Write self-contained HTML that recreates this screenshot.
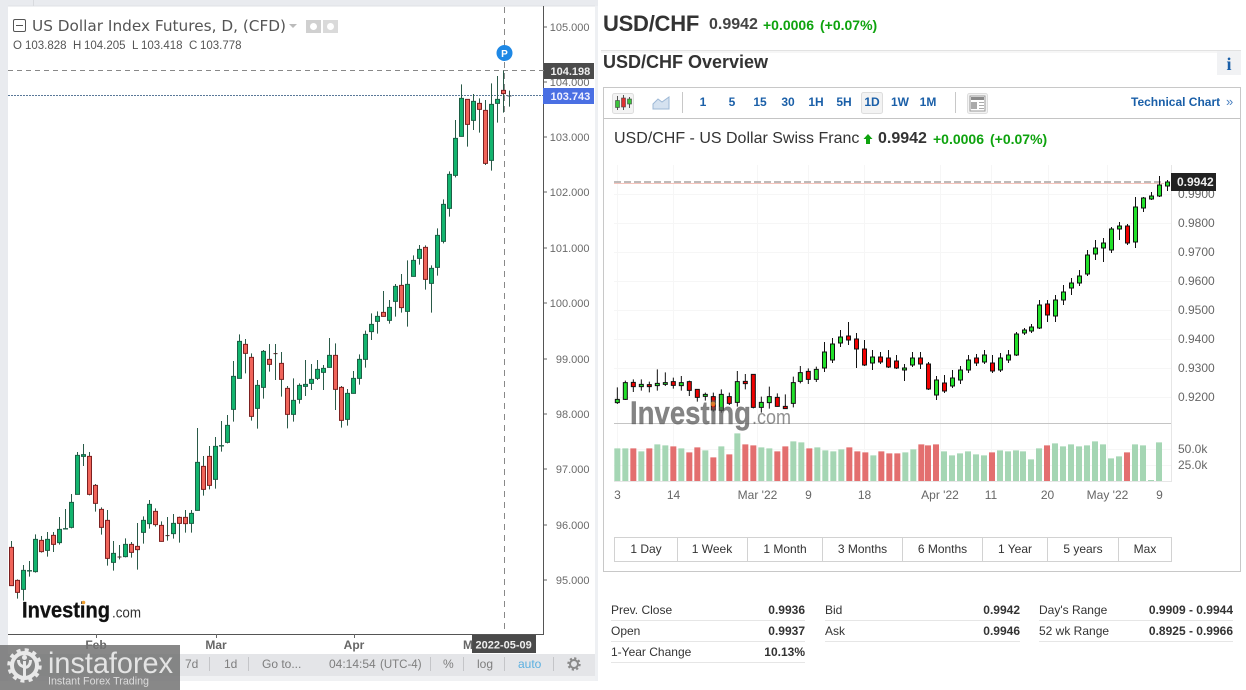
<!DOCTYPE html>
<html><head><meta charset="utf-8"><style>
html,body{margin:0;padding:0;width:1246px;height:690px;overflow:hidden;background:#fff;font-family:"Liberation Sans",sans-serif;color:#333}
.t{position:absolute;white-space:nowrap;line-height:1}
.b{font-weight:700}
.g{color:#0ea30e}
.tb{position:absolute;top:96px;font:700 12px/12px "Liberation Sans",sans-serif;color:#1a5fa8;width:28px;text-align:center}
.row{position:absolute;height:20px;border-bottom:1px solid #e6e6e6;font-size:12px;line-height:20px;color:#333}
.row b{position:absolute;right:0;top:0;color:#333}
.rg{position:absolute;top:537px;height:23px;border:1px solid #d2d2d2;border-left:0;font-size:12px;line-height:23px;text-align:center;color:#333;box-sizing:content-box}
svg{position:absolute;left:0;top:0}
</style></head><body>
<svg width="1246" height="690" viewBox="0 0 1246 690" font-family="Liberation Sans, sans-serif">
<!-- left panel frame -->
<rect x="0" y="0" width="598" height="6" fill="#e9ebef"/>
<rect x="0" y="0" width="8" height="681" fill="#e9ebef"/>
<rect x="8" y="5.5" width="587" height="1" fill="#dfe1e5"/>
<rect x="595" y="6" width="3" height="675" fill="#eef0f3"/>
<rect x="33" y="0" width="1" height="6" fill="#d8dade"/>
<rect x="8" y="654" width="587" height="22" fill="#e4e5e8"/>
<rect x="8" y="676" width="587" height="5" fill="#f0f1f3"/>
<!-- left axes -->
<path d="M543.5 6V634.5H8" fill="none" stroke="#555" stroke-width="1"/>
<path d="M544 27h3M544 82h3M544 137h3M544 192h3M544 248h3M544 303h3M544 359h3M544 414h3M544 469h3M544 525h3M544 580h3M96.5 634v4M216.5 634v4M354.5 634v4" stroke="#666"/>
<path d="M8 70.5H544" stroke="#888" stroke-dasharray="5 4"/>
<path d="M8 95.5H544" stroke="#5a7898" stroke-dasharray="2 1"/>
<path d="M504.5 7V634" stroke="#888" stroke-dasharray="6 5"/>
<g font-size="11" fill="#6a6a6a" text-anchor="end">
<text x="589.500" y="31">105.000</text><text x="589.500" y="141">103.000</text><text x="589.500" y="196">102.000</text><text x="589.500" y="252">101.000</text><text x="589.500" y="307">100.000</text><text x="589.500" y="363">99.000</text><text x="589.500" y="418">98.000</text><text x="589.500" y="473">97.000</text><text x="589.500" y="529">96.000</text><text x="589.500" y="584">95.000</text><text x="589.500" y="86">104.000</text>
</g>
<!-- left candles, part 1 -->
<g transform="translate(.17,330) scale(.33333)" stroke-width="3">
<path fill="none" stroke="#2a5a48" d="M34 633V768M52 748V806M70 705V812M88 693V740M106 613V728M124 618V668M142 606V680M160 606V666M178 561V644M196 537V598M214 492V595M232 366V493M250 342V408M268 366V496M286 462V545M304 532V614M322 540V707M340 633V722M358 645V688M376 625V682M394 636V683M412 579V719M430 559V641M448 510V596M466 535V590M484 574V635M502 561V632M520 552V626M538 560V638M556 540V608M574 540V608M592 294V542M610 378V497M628 348V478M646 321V476M664 273V365M682 255V340M700 93V275M718 13V145M736 27V130M754 70V272M772 150V296M790 60V206M808 42V125M826 42V150"/>
<path fill="#f0645a" stroke="#7d2020" d="M28 652H40V767H28ZM46 751H58V787H46ZM118 631H130V665H118ZM154 616H166V643H154ZM262 379H274V493H262ZM280 466H292V520H280ZM298 538H310V592H298ZM316 571H328V685H316ZM388 643H400V667H388ZM406 649H418V659H406ZM460 544H472V584H460ZM478 586H490V634H478ZM532 562H544V580H532ZM550 562H562V581H550ZM604 409H616V478H604ZM622 379H634V466H622ZM730 43H742V70H730ZM748 82H760V259H748ZM802 88H814V103H802Z"/>
<path fill="#12b46e" stroke="#1c5f45" d="M64 721H76V778H64ZM82 722H94V723H82ZM100 628H112V725H100ZM136 628H148V661H136ZM172 598H184V638H172ZM190 596H202V597H190ZM208 517H220V592H208ZM226 376H238V493H226ZM244 374H256V379H244ZM334 670H346V697H334ZM370 643H382V680H370ZM424 571H436V607H424ZM442 523H454V581H442ZM514 580H526V611H514ZM568 550H580V580H568ZM586 397H598V541H586ZM640 349H652V448H640ZM658 347H670V348H658ZM676 286H688V337H676ZM694 139H706V238H694ZM712 34H724V145H712ZM766 166H778V235H766ZM784 64H796V172H784Z"/>
<path stroke="#4a2020" d="M352 681H364M496 617H508M820 71H832"/>
</g>
<!-- left candles, part 2 -->
<g transform="translate(270.17,80) scale(.33333)" stroke-width="3">
<path fill="none" stroke="#2a5a48" d="M34 816V950M52 918V1045M70 895V1025M88 910V971M106 840V948M124 852V930M142 840V900M160 855V930M178 774V863M196 790V990M214 918V1043M232 927V1037M250 873V941M268 823V914M286 752V863M304 700V780M322 694V761M340 633V710M358 660V731M376 612V710M394 582V698M412 541V740M430 526V590M448 495V554M466 496V629M484 556V698M502 445V587M520 358V490M538 274V410M556 120V292M574 13V170M592 57V200M610 42V150M628 55V158M646 60V255M664 10V272M682 -12V128M700 -28V98M718 32V80"/>
<path fill="#f0645a" stroke="#7d2020" d="M28 850H40V898H28ZM46 925H58V1003H46ZM190 826H202V928H190ZM208 922H220V1021H208ZM334 697H346V709H334ZM388 616H400V683H388ZM460 502H472V598H460ZM586 58H598V133H586ZM622 70H634V88H622ZM640 91H652V250H640ZM694 31H706V41H694Z"/>
<path fill="#12b46e" stroke="#1c5f45" d="M64 961H76V1003H64ZM82 916H94V958H82ZM100 913H112V919H100ZM118 898H130V910H118ZM136 868H148V895H136ZM154 865H166V877H154ZM172 826H184V862H172ZM226 940H238V1018H226ZM244 895H256V940H244ZM262 838H274V895H262ZM280 763H292V838H280ZM298 733H310V755H298ZM316 709H328V724H316ZM352 682H364V721H352ZM370 619H382V664H370ZM406 613H418V694H406ZM424 541H436V589H424ZM442 508H454V535H442ZM478 565H490V610H478ZM496 466H508V562H496ZM514 373H526V484H514ZM532 283H544V385H532ZM550 175H562V286H550ZM568 55H580V169H568ZM604 64H616V121H604ZM658 73H670V241H658ZM676 58H688V70H676Z"/>
<path stroke="#3d4a55" d="M712 48H724"/>
</g>
<!-- left tags -->
<circle cx="504.5" cy="53" r="8" fill="#1e88e5"/>
<text x="504.5" y="57" font-size="10" font-weight="700" fill="#fff" text-anchor="middle">P</text>
<rect x="544" y="63" width="50" height="16" fill="#4b4b4b"/>
<text x="550.500" y="75" font-size="11" font-weight="700" fill="#eee">104.198</text>
<rect x="543" y="88" width="51" height="16" fill="#4a6fe3"/>
<text x="550.500" y="100" font-size="11" font-weight="700" fill="#f0f0ff">103.743</text>
<rect x="472" y="635" width="64" height="18" fill="#4a4a4a"/>
<text x="475.500" y="648.500" font-size="11" font-weight="700" fill="#eee">2022-05-09</text>
<g font-size="12" font-weight="700" fill="#666" text-anchor="middle">
<text x="96" y="649">Feb</text><text x="216" y="649">Mar</text><text x="354" y="649">Apr</text><text x="468" y="649">M</text>
</g>
<!-- Investing logo left -->
<text x="22" y="617.500" font-size="22.500" font-weight="700" fill="#111" stroke="#111" stroke-width=".3" textLength="88" lengthAdjust="spacingAndGlyphs">Investing</text>
<text x="112" y="617.500" font-size="15" fill="#333" textLength="29" lengthAdjust="spacingAndGlyphs">.com</text>
<circle cx="83.500" cy="602.500" r="1.800" fill="#f0a030"/>
<!-- left toolbar -->
<g font-size="12" fill="#7e7e7e">
<text x="185" y="668">7d</text><text x="224" y="668">1d</text><text x="262" y="668">Go to...</text>
<text x="329" y="668">04:14:54</text><text x="380" y="668" font-size="11.500">(UTC-4)</text>
<text x="443" y="668">%</text><text x="477" y="668">log</text><text x="518" y="668" fill="#5bb0e0">auto</text>
</g>
<path d="M209.500 657v14M248.500 657v14M430.500 657v14M463.500 657v14M504.500 657v14M553.500 657v14" stroke="#c4c5c8"/>
<circle cx="574" cy="664" r="4" fill="none" stroke="#8a8a8a" stroke-width="2"/>
<circle cx="574" cy="664" r="5.700" fill="none" stroke="#8a8a8a" stroke-width="2" stroke-dasharray="2.200 2.270"/>
<!-- instaforex -->
<rect x="0" y="645" width="180" height="45" fill="#757575" fill-opacity=".86"/>
<circle cx="24.500" cy="665.500" r="12.500" fill="none" stroke="#e8e8e8" stroke-width="4"/>
<circle cx="24.500" cy="665.500" r="15.500" fill="none" stroke="#e8e8e8" stroke-width="3.500" stroke-dasharray="4 4.120"/>
<path d="M24.500 661V679M18.500 660c0 5 3 6 6 7s6-2 6-7" fill="none" stroke="#e8e8e8" stroke-width="3"/>
<circle cx="24.500" cy="657.500" r="2.500" fill="#e8e8e8"/>
<text x="48" y="673" font-size="30" fill="#e4e4e4" textLength="125" lengthAdjust="spacingAndGlyphs">instaforex</text>
<text x="48" y="684.500" font-size="11" fill="#dcdcdc" textLength="101" lengthAdjust="spacingAndGlyphs">Instant Forex Trading</text>
<!-- right header rule -->
<rect x="601" y="50" width="640" height="1" fill="#e2e2e2"/>
<rect x="601" y="51" width="640" height="2" fill="#f6f6f6"/>
<rect x="1217" y="51" width="24" height="24" fill="#f1f2f4"/>
<text x="1229" y="70" font-family="Liberation Serif, serif" font-size="18" font-weight="700" fill="#1a5fa8" text-anchor="middle">i</text>
<!-- right chart panel -->
<rect x="603.500" y="87.500" width="637" height="484" fill="#fff" stroke="#c8c8c8"/>
<path d="M604 118.500H1240" stroke="#c4c4c4"/>
<path d="M682.500 92v21M955.500 92v21" stroke="#c8c8c8"/>
<rect x="612.500" y="93.500" width="21" height="20" rx="2" fill="#f3f3f3" stroke="#ddd"/>
<path d="M617.500 96v14M623.500 95v15M629.500 97v11" stroke="#555"/>
<rect x="615.500" y="100.500" width="4" height="7" fill="#3bc43b" stroke="#444" stroke-width=".6"/>
<rect x="621.500" y="98" width="4" height="9" fill="#e03030" stroke="#444" stroke-width=".6"/>
<rect x="627.500" y="99" width="4" height="5" fill="#3bc43b" stroke="#444" stroke-width=".6"/>
<path d="M653 109V104L658 99L662 102L669 97V109Z" fill="#d5e2f0" stroke="#9db8d6"/>
<rect x="861.500" y="92.500" width="21" height="21" rx="2" fill="#f3f3f3" stroke="#ddd"/>
<rect x="967.500" y="93.500" width="20" height="20" rx="2" fill="#f3f3f3" stroke="#ddd"/>
<rect x="970" y="96" width="15" height="15" fill="#fff" stroke="#999"/>
<rect x="971" y="97" width="13" height="3" fill="#8a8a8a"/>
<rect x="971" y="102" width="6" height="7" fill="#aaa"/>
<path d="M979 102.500h5M979 105.500h5M979 108.500h5" stroke="#aaa"/>
<!-- right chart grid -->
<path d="M614 194.500H1171M614 223.500H1171M614 252.500H1171M614 281.500H1171M614 310.500H1171M614 339.500H1171M614 368.500H1171M614 397.500H1171M614 449.500H1171M614 465.500H1171M617.500 165V481M673.500 165V481M757.500 165V481M808.500 165V481M864.500 165V481M940.500 165V481M991.500 165V481M1048.500 165V481M1107.500 165V481" stroke="#f6f6f6"/>
<path d="M1171.500 165V481.500H614" fill="none" stroke="#e6e6e6"/>
<path d="M614 423.500H1171" stroke="#c4c4c4"/>
<path d="M614 183.500H1164" stroke="#f5c4bc"/>
<path d="M614 182H1164" stroke="#aaa4a2" stroke-width="1.500" stroke-dasharray="7 3"/>
<!-- volume -->
<g transform="translate(605,360) scale(.33333)">
<path fill="#a5d6b4" d="M28 265H46V363H28ZM52 265H70V363H52ZM100 274H118V363H100ZM148 253H166V363H148ZM172 256H190V363H172ZM220 265H238V363H220ZM292 271H310V363H292ZM340 259H358V363H340ZM388 220H406V363H388ZM460 262H478V363H460ZM484 265H502V363H484ZM556 244H574V363H556ZM580 247H598V363H580ZM628 262H646V363H628ZM652 271H670V363H652ZM676 274H694V363H676ZM700 268H718V363H700ZM796 286H814V363H796ZM892 277H910V363H892ZM916 268H934V363H916Z"/>
<path fill="#e36f6f" d="M76 265H94V363H76ZM124 265H142V363H124ZM196 259H214V363H196ZM244 277H262V363H244ZM268 262H286V363H268ZM316 292H334V363H316ZM364 283H382V363H364ZM412 253H430V363H412ZM436 256H454V363H436ZM508 274H526V363H508ZM532 259H550V363H532ZM604 265H622V363H604ZM724 262H742V363H724ZM748 274H766V363H748ZM772 277H790V363H772ZM820 274H838V363H820ZM844 280H862V363H844ZM868 280H886V363H868ZM940 253H958V363H940Z"/>
</g>
<g transform="translate(920,400) scale(.33333)">
<path fill="#e36f6f" d="M15 136H33V243H15ZM39 133H57V243H39ZM207 157H225V243H207ZM372 136H390V243H372ZM612 157H630V243H612Z"/>
<path fill="#a5d6b4" d="M63 154H81V243H63ZM87 166H105V243H87ZM111 160H129V243H111ZM135 154H153V243H135ZM159 163H177V243H159ZM183 166H201V243H183ZM231 151H249V243H231ZM255 154H273V243H255ZM279 151H297V243H279ZM300 154H318V243H300ZM324 178H342V243H324ZM348 145H366V243H348ZM396 130H414V243H396ZM420 139H438V243H420ZM444 133H462V243H444ZM468 139H486V243H468ZM492 136H510V243H492ZM516 124H534V243H516ZM540 133H558V243H540ZM564 175H582V243H564ZM588 169H606V243H588ZM636 133H654V243H636ZM660 136H678V243H660ZM684 240H702V243H684ZM708 127H726V243H708Z"/>
</g>
<!-- right candles, part 1 -->
<g transform="translate(605,360) scale(.33333)" stroke-width="3" stroke="#111">
<path fill="none" d="M37 82V132M61 62V120M85 58V96M109 58V92M133 65V97M157 28V92M181 37V78M205 53V86M229 48V92M253 62V108M277 88V125M301 98V122M325 98V155M349 88V158M373 98V135M397 33V140M421 42V88M445 42V145M469 110V158M493 80V146M517 100V140M541 103V147M565 50V142M586 18V70M610 25V72M634 20V66"/>
<path fill="#22e02a" d="M31 118H43V128H31ZM55 68H67V118H55ZM103 73H115V80H103ZM151 70H163V77H151ZM175 68H187V73H175ZM223 68H235V77H223ZM295 103H307V109H295ZM343 103H355V151H343ZM391 65H403V127H391ZM463 127H475V142H463ZM487 110H499V128H487ZM559 68H571V130H559ZM580 38H592V64H580ZM628 28H640V58H628Z"/>
<path fill="#f00000" d="M79 67H91V80H79ZM127 74H139V80H127ZM199 65H211V76H199ZM247 65H259V91H247ZM271 88H283V112H271ZM319 110H331V150H319ZM367 110H379V130H367ZM415 64H427V71H415ZM439 43H451V142H439ZM511 112H523V139H511ZM535 139H547V146H535ZM604 34H616V58H604Z"/>
</g>
<!-- right candles, part 2 -->
<g stroke="#111" stroke-width="1">
<path fill="none" d="M824.500 342V372M832.500 338V363M840.500 330V347M848.500 322V345M856.500 333V368M864.500 340V366M872.500 350V370M880.500 352V364M888.500 350V368M896.500 355V369M904.500 364V381M912.500 352V367M920.500 352V369M928.500 362V390M936.500 376V400M944.500 375V393M952.500 370V388M960.500 366V384M968.500 355V373M976.500 354V366M984.500 350V364M992.500 355V373M1000.500 353V372M1008.500 350V363M1016.500 332V356M1024.500 328V335M1031.500 324V333M1039.500 300V329M1047.500 300V322M1055.500 295V322M1063.500 285V305M1071.500 278V295M1079.500 270V286M1087.500 250V276M1095.500 240V260M1103.500 238V262M1111.500 227V253M1119.500 222V240M1127.500 224V245M1135.500 197V248M1143.500 197V212M1151.500 192V200M1159.500 176V197M1167.500 180V191"/>
<path fill="#22e02a" d="M822.500 352H826.500V368H822.500ZM830.500 344H834.500V360H830.500ZM838.500 337H842.500V343H838.500ZM870.500 357H874.500V363H870.500ZM902.500 368H906.500V370H902.500ZM910.500 358H914.500V365H910.500ZM934.500 380H938.500V395H934.500ZM950.500 378H954.500V386H950.500ZM958.500 370H962.500V380H958.500ZM966.500 360H970.500V370H966.500ZM982.500 355H986.500V362H982.500ZM998.500 358H1002.500V370H998.500ZM1006.500 355H1010.500V360H1006.500ZM1014.500 334H1018.500V355H1014.500ZM1022.500 330H1026.500V333H1022.500ZM1029.500 327H1033.500V331H1029.500ZM1037.500 305H1041.500V328H1037.500ZM1053.500 300H1057.500V316H1053.500ZM1061.500 292H1065.500V300H1061.500ZM1069.500 283H1073.500V288H1069.500ZM1077.500 276H1081.500V283H1077.500ZM1085.500 255H1089.500V274H1085.500ZM1093.500 248H1097.500V254H1093.500ZM1101.500 243H1105.500V248H1101.500ZM1109.500 229H1113.500V250H1109.500ZM1117.500 226H1121.500V229H1117.500ZM1133.500 207H1137.500V242H1133.500ZM1141.500 198H1145.500V208H1141.500ZM1149.500 196H1153.500V199H1149.500ZM1157.500 185H1161.500V196H1157.500ZM1165.500 182H1169.500V186H1165.500Z"/>
<path fill="#f00000" d="M846.500 336H850.500V340H846.500ZM854.500 339H858.500V349H854.500ZM862.500 349H866.500V365H862.500ZM878.500 357H882.500V362H878.500ZM886.500 358H890.500V367H886.500ZM894.500 361H898.500V368H894.500ZM918.500 358H922.500V364H918.500ZM926.500 364H930.500V389H926.500ZM942.500 383H946.500V391H942.500ZM974.500 358H978.500V363H974.500ZM990.500 363H994.500V371H990.500ZM1045.500 304H1049.500V315H1045.500ZM1125.500 226H1129.500V243H1125.500Z"/>
</g>
<!-- right chart labels -->
<g font-size="12" fill="#666">
<text x="1178" y="198">0.9900</text><text x="1178" y="227">0.9800</text><text x="1178" y="256">0.9700</text><text x="1178" y="285">0.9600</text><text x="1178" y="314">0.9500</text><text x="1178" y="343">0.9400</text><text x="1178" y="372">0.9300</text><text x="1178" y="401">0.9200</text>
<text x="1178" y="453">50.0k</text><text x="1178" y="469">25.0k</text>
</g>
<g font-size="12" fill="#666" text-anchor="middle">
<text x="617.500" y="499">3</text><text x="673.500" y="499">14</text><text x="757.500" y="499">Mar '22</text><text x="808.500" y="499">9</text><text x="864.500" y="499">18</text><text x="940" y="499">Apr '22</text><text x="991" y="499">11</text><text x="1047.500" y="499">20</text><text x="1107.500" y="499">May '22</text><text x="1159.500" y="499">9</text>
</g>
<rect x="1171" y="173" width="45" height="18" fill="#222"/>
<text x="1177" y="186" font-size="12" font-weight="700" fill="#eee">0.9942</text>
<!-- watermark -->
<text x="630" y="424" font-size="32" font-weight="700" fill="#555" fill-opacity=".72" stroke="#555" stroke-opacity=".5" stroke-width=".4" textLength="121" lengthAdjust="spacingAndGlyphs">Investing</text>
<text x="752" y="424" font-size="20" fill="#555" fill-opacity=".65" textLength="39" lengthAdjust="spacingAndGlyphs">.com</text>
<circle cx="713" cy="404" r="2.400" fill="#f0a030" fill-opacity=".7"/>
<!-- arrow -->
<path d="M868 134l4.500 5h-2.500v5h-4v-5h-2.500z" fill="#0ea30e"/>
</svg>

<!-- left text -->
<svg style="left:13px;top:19px" width="14" height="14"><rect x=".5" y=".5" width="12" height="12" rx="1.500" fill="none" stroke="#555"/><path d="M3 6.500h7" stroke="#555"/></svg>
<div class="t" style="left:32px;top:18px;font:15.300px/17px 'DejaVu Sans',sans-serif;color:#555">US Dollar Index Futures, D, (CFD)</div>
<svg style="left:289px;top:24px" width="9" height="5"><path d="M0 0h8L4 4z" fill="#bbb"/></svg>
<svg style="left:306px;top:19px" width="34" height="15"><rect x="0" y="1" width="15" height="13" fill="#d0d0d0"/><circle cx="7.500" cy="7.500" r="3.500" fill="#fff"/><rect x="17" y="1" width="15" height="13" fill="#dadada"/><circle cx="24.500" cy="7.500" r="3.500" fill="#fff"/></svg>
<div class="t" style="left:13px;top:41px;font-size:11.500px;color:#555">O</div>
<div class="t" style="left:25px;top:41px;font-size:11.500px;color:#555">103.828</div>
<div class="t" style="left:73px;top:41px;font-size:11.500px;color:#555">H</div>
<div class="t" style="left:84px;top:41px;font-size:11.500px;color:#555">104.205</div>
<div class="t" style="left:132px;top:41px;font-size:11.500px;color:#555">L</div>
<div class="t" style="left:141px;top:41px;font-size:11.500px;color:#555">103.418</div>
<div class="t" style="left:189px;top:41px;font-size:11.500px;color:#555">C</div>
<div class="t" style="left:200px;top:41px;font-size:11.500px;color:#555">103.778</div>

<!-- right header -->
<div class="t b" style="left:603px;top:12px;font-size:22px;line-height:24px;color:#333;letter-spacing:-.25px">USD/CHF</div>
<div class="t b" style="left:709px;top:16px;font-size:16px;line-height:18px;color:#444">0.9942</div>
<div class="t b g" style="left:763px;top:17px;font-size:14px;line-height:16px">+0.0006</div>
<div class="t b g" style="left:820px;top:17px;font-size:14px;line-height:16px">(+0.07%)</div>
<div class="t b" style="left:603px;top:52px;font-size:18px;line-height:20px;color:#333">USD/CHF Overview</div>

<!-- toolbar -->
<div class="tb" style="left:689px">1</div><div class="tb" style="left:718px">5</div><div class="tb" style="left:746px">15</div><div class="tb" style="left:774px">30</div><div class="tb" style="left:802px">1H</div><div class="tb" style="left:830px">5H</div><div class="tb" style="left:858px">1D</div><div class="tb" style="left:886px">1W</div><div class="tb" style="left:914px">1M</div>
<div class="t b" style="left:1131px;top:96px;font-size:12px;color:#1a5fa8">Technical Chart</div>
<div class="t" style="left:1226px;top:95px;font-size:13px;color:#4a80c0">»</div>

<!-- chart title -->
<div class="t" style="left:614px;top:130px;font-size:16px;line-height:18px;color:#333">USD/CHF - US Dollar Swiss Franc</div>
<div class="t b" style="left:878px;top:130px;font-size:16px;line-height:18px;color:#333">0.9942</div>
<div class="t b g" style="left:933px;top:131px;font-size:14px;line-height:16px">+0.0006</div>
<div class="t b g" style="left:990px;top:131px;font-size:14px;line-height:16px">(+0.07%)</div>

<!-- range -->
<div class="rg" style="left:614px;width:62px;border-left:1px solid #d2d2d2">1 Day</div>
<div class="rg" style="left:677px;width:70px">1 Week</div>
<div class="rg" style="left:748px;width:74px">1 Month</div>
<div class="rg" style="left:823px;width:79px">3 Months</div>
<div class="rg" style="left:903px;width:79px">6 Months</div>
<div class="rg" style="left:983px;width:64px">1 Year</div>
<div class="rg" style="left:1048px;width:70px">5 years</div>
<div class="rg" style="left:1119px;width:52px">Max</div>

<!-- table -->
<div class="row" style="left:611px;top:600px;width:194px">Prev. Close<b>0.9936</b></div>
<div class="row" style="left:611px;top:621px;width:194px">Open<b>0.9937</b></div>
<div class="row" style="left:611px;top:642px;width:194px">1-Year Change<b>10.13%</b></div>
<div class="row" style="left:825px;top:600px;width:195px">Bid<b>0.9942</b></div>
<div class="row" style="left:825px;top:621px;width:195px">Ask<b>0.9946</b></div>
<div class="row" style="left:1039px;top:600px;width:194px">Day's Range<b>0.9909 - 0.9944</b></div>
<div class="row" style="left:1039px;top:621px;width:194px">52 wk Range<b>0.8925 - 0.9966</b></div>
</body></html>
